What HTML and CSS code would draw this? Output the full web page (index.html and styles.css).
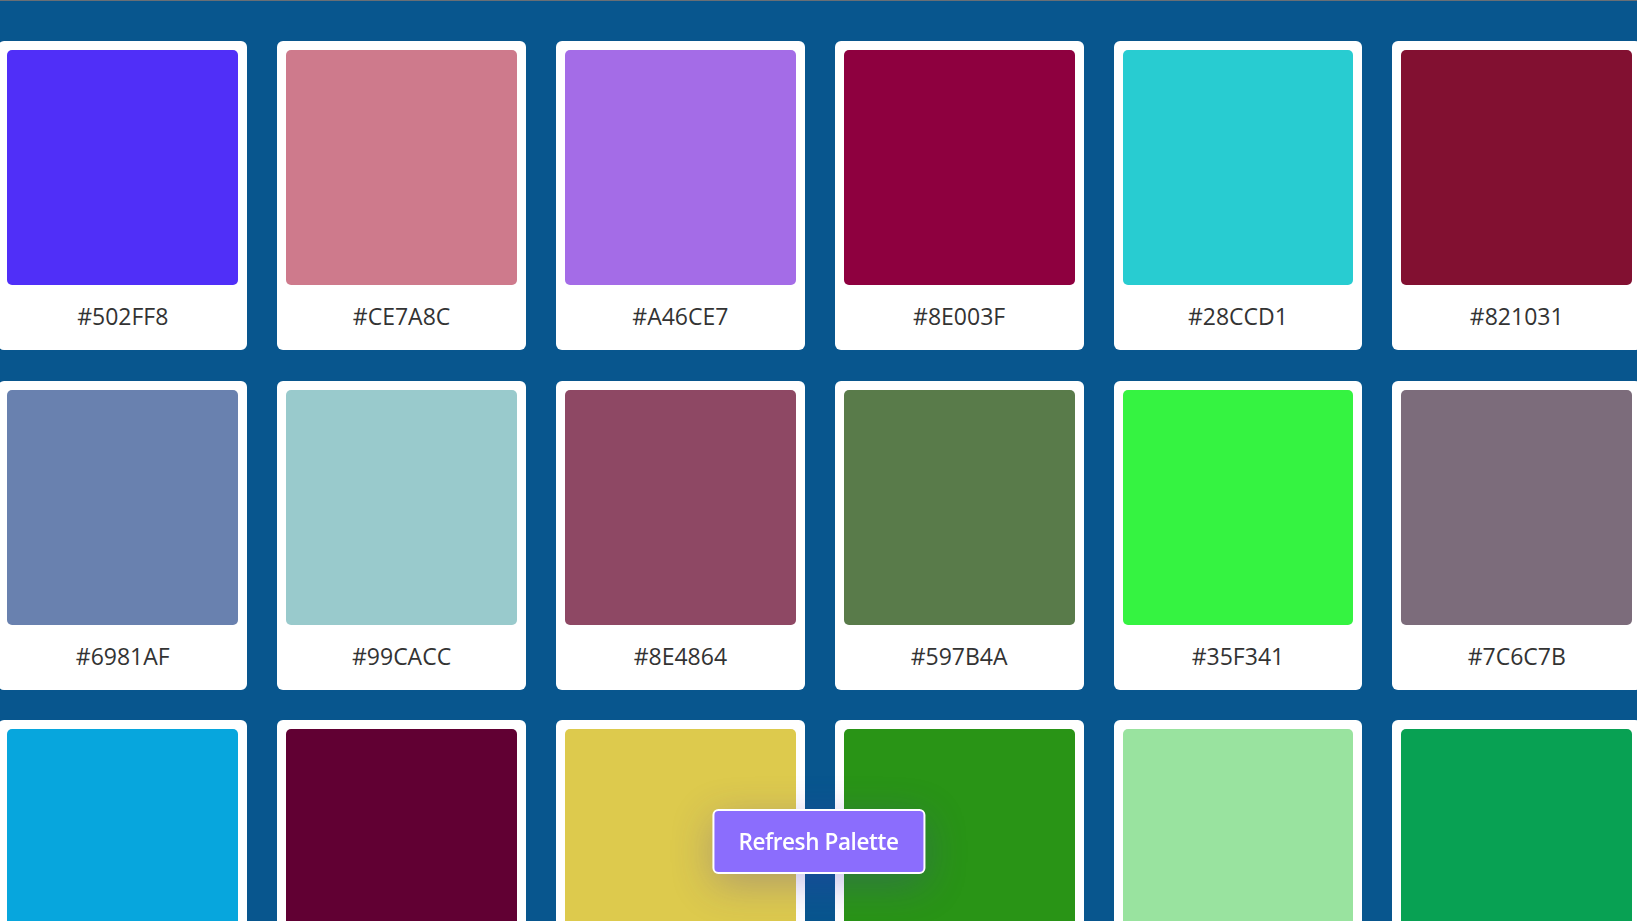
FILE: index.html
```html
<!DOCTYPE html>
<html lang="en">
<head>
<meta charset="utf-8">
<title>Palette</title>
<link rel="stylesheet" href="styles.css">
</head>
<body>
<div class="topline"></div>
<main class="palette">
  <div class="card"><div class="swatch" style="background:#502FF8"></div><div class="label">#502FF8</div></div>
  <div class="card"><div class="swatch" style="background:#CE7A8C"></div><div class="label">#CE7A8C</div></div>
  <div class="card"><div class="swatch" style="background:#A46CE7"></div><div class="label">#A46CE7</div></div>
  <div class="card"><div class="swatch" style="background:#8E003F"></div><div class="label">#8E003F</div></div>
  <div class="card"><div class="swatch" style="background:#28CCD1"></div><div class="label">#28CCD1</div></div>
  <div class="card"><div class="swatch" style="background:#821031"></div><div class="label">#821031</div></div>

  <div class="card"><div class="swatch" style="background:#6981AF"></div><div class="label">#6981AF</div></div>
  <div class="card"><div class="swatch" style="background:#99CACC"></div><div class="label">#99CACC</div></div>
  <div class="card"><div class="swatch" style="background:#8E4864"></div><div class="label">#8E4864</div></div>
  <div class="card"><div class="swatch" style="background:#597B4A"></div><div class="label">#597B4A</div></div>
  <div class="card"><div class="swatch" style="background:#35F341"></div><div class="label">#35F341</div></div>
  <div class="card"><div class="swatch" style="background:#7C6C7B"></div><div class="label">#7C6C7B</div></div>

  <div class="card"><div class="swatch" style="background:#07A6DD"></div><div class="label">#07A6DD</div></div>
  <div class="card"><div class="swatch" style="background:#610033"></div><div class="label">#610033</div></div>
  <div class="card"><div class="swatch" style="background:#DDCA4D"></div><div class="label">#DDCA4D</div></div>
  <div class="card"><div class="swatch" style="background:#299416"></div><div class="label">#299416</div></div>
  <div class="card"><div class="swatch" style="background:#99E39F"></div><div class="label">#99E39F</div></div>
  <div class="card"><div class="swatch" style="background:#08A153"></div><div class="label">#08A153</div></div>
</main>
<button class="refresh-btn" type="button">Refresh Palette</button>
</body>
</html>
```
FILE: styles.css
```css
html, body {
  margin: 0;
  padding: 0;
  overflow: hidden;
  height: 100%;
}

body {
  background: #08568E;
  font-family: "Open Sans", "Noto Sans", sans-serif;
}

.topline {
  height: 1px;
  background: #6a6f75;
}

.palette {
  display: grid;
  grid-template-columns: repeat(6, 248.8px);
  column-gap: 30px;
  row-gap: 30.5px;
  justify-content: center;
  padding-top: 40px;
  margin-left: 2.5px;
}

.card {
  background: #ffffff;
  border-radius: 6px;
  padding: 9px 9px 0;
  display: flex;
  flex-direction: column;
}

.swatch {
  height: 235px;
  border-radius: 5px;
}

.label {
  text-align: center;
  font-size: 23px;
  line-height: 30px;
  color: #333333;
  padding: 16px 0 19px;
}

.refresh-btn {
  position: fixed;
  left: 50%;
  bottom: 47px;
  transform: translateX(-50%);
  background: #8B6DFD;
  color: #ffffff;
  border: 2px solid #ffffff;
  border-radius: 6px;
  font-family: "Open Sans", "Noto Sans", sans-serif;
  font-weight: 600;
  font-size: 22.5px;
  letter-spacing: -0.4px;
  line-height: 30px;
  padding: 15.5px 24.5px;
  box-shadow: 0 10px 40px rgba(70, 50, 180, 0.3);
  cursor: pointer;
}
```
